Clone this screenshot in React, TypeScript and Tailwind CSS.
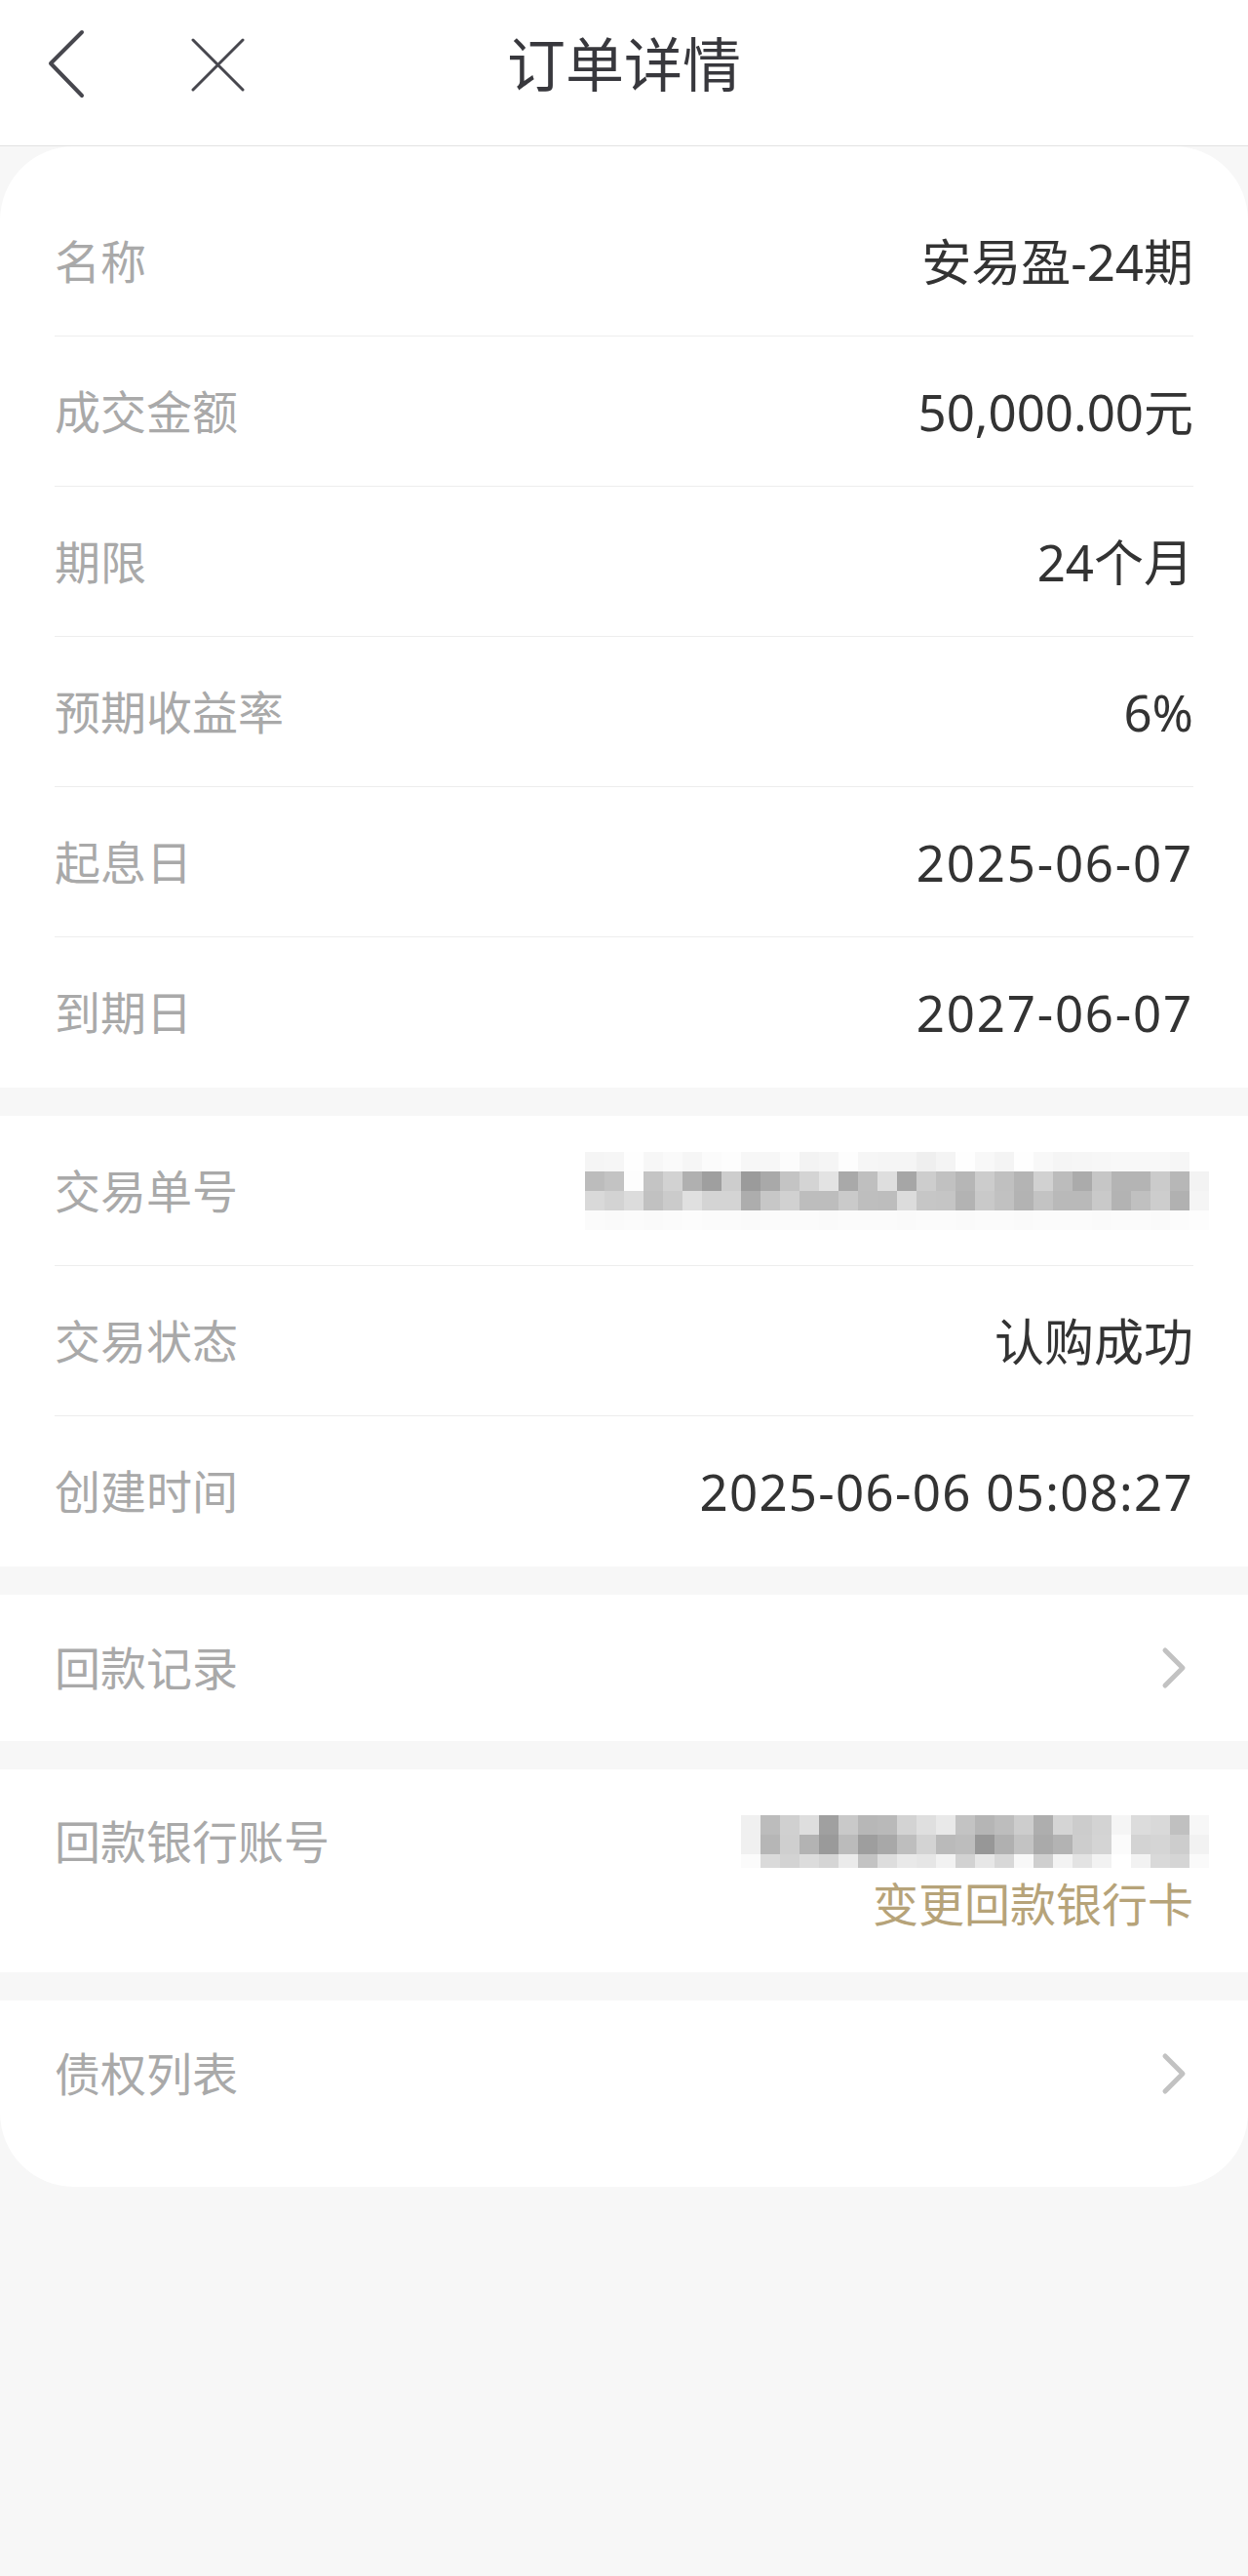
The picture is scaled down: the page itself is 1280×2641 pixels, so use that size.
import React from "react";

const font = "font-['Noto_Sans','Noto_Sans_CJK_SC',sans-serif]";

const basicRows = [
  { label: "名称", value: "安易盈-24期", wide: false },
  { label: "成交金额", value: "50,000.00元", wide: false },
  { label: "期限", value: "24个月", wide: false },
  { label: "预期收益率", value: "6%", wide: false },
  { label: "起息日", value: "2025-06-07", wide: true },
  { label: "到期日", value: "2027-06-07", wide: true },
];

// mosaic covering the order number
const orderMosaic = [
  ["f5", "f6", "fe", "f7", "fa", "f6", "fb", "fd", "f7", "f7", "fc", "f3", "f5", "fd", "f6", "f5", "f5", "ef", "f4", "fe", "f8", "f4", "fe", "f8", "f5", "f6", "f7", "f8", "f8", "f8", "f6", "ff"],
  ["bc", "c3", "fd", "c4", "d2", "b0", "9f", "cd", "9b", "a9", "c4", "d4", "e3", "a9", "bf", "de", "a6", "cd", "c1", "b6", "cc", "c0", "b4", "d1", "bc", "ab", "c6", "b4", "b4", "cb", "b7", "f3"],
  ["d9", "d3", "dc", "c1", "cb", "e0", "d4", "d4", "ad", "c7", "d1", "bd", "bd", "ca", "be", "bd", "dc", "c6", "c5", "b3", "c9", "c1", "b3", "c3", "b9", "b9", "c9", "b3", "c0", "cd", "b1", "f5"],
  ["fb", "fa", "fb", "fa", "fb", "fc", "fb", "fb", "fa", "fb", "fb", "fb", "fa", "fb", "fb", "fb", "fa", "fb", "fb", "fa", "fb", "fb", "fa", "fb", "fb", "fb", "fa", "fb", "fb", "fa", "fc", "fd"],
];

// mosaic covering the bank account
const bankMosaic = [
  ["f0", "bc", "d0", "de", "a0", "c9", "b7", "b9", "d3", "df", "e9", "c3", "b5", "bd", "cd", "ae", "d5", "cc", "d3", "f5", "dc", "d9", "c0", "f7"],
  ["f0", "b6", "cf", "b3", "9a", "bb", "9e", "a8", "be", "d3", "ba", "bd", "97", "b0", "c3", "aa", "b3", "cd", "d4", "fb", "d3", "d5", "cd", "f2"],
  ["fb", "da", "d3", "dc", "d5", "eb", "c3", "dd", "e9", "e6", "f2", "d2", "e7", "d8", "f8", "cf", "f3", "e3", "f2", "ff", "f2", "d9", "d5", "fa"],
];

function Mosaic({ rows, heights }: { rows: string[][]; heights: number[] }) {
  return (
    <div className="flex flex-col">
      {rows.map((row, i) => (
        <div key={i} className="flex">
          {row.map((c, j) => (
            <div
              key={j}
              className="w-[20px]"
              style={{ height: heights[i], background: `#${c}${c}${c}` }}
            />
          ))}
        </div>
      ))}
    </div>
  );
}

function Chevron() {
  return (
    <svg width="32" height="44" viewBox="0 0 32 44" fill="none" className="mr-[4px]">
      <path d="M7 4 L25 22 L7 40" stroke="#c2c2c2" strokeWidth="5" strokeLinecap="round" strokeLinejoin="round" />
    </svg>
  );
}

function Row({ label, children, last }: { label: string; children: React.ReactNode; last?: boolean }) {
  return (
    <div className={`flex h-[154px] items-center justify-between ${last ? "" : "border-b border-[#ededed]"}`}>
      <span className="text-[47px] leading-[64px] text-[#a9a9a9]">{label}</span>
      {children}
    </div>
  );
}

export default function App() {
  return (
    <div className={`min-h-[2641px] w-[1280px] bg-[#f7f7f7] ${font}`}>
      <header className="grid h-[150px] grid-cols-[1fr_auto_1fr] border-b border-[#e2e2e2] bg-white pt-[30px]">
        <div className="flex items-start pl-[48px]">
          <svg width="40" height="72" viewBox="0 0 40 72" fill="none">
            <path d="M36 3 L4 35 L36 68" stroke="#47474e" strokeWidth="4" strokeLinecap="round" strokeLinejoin="round" />
          </svg>
          <svg width="56" height="56" viewBox="0 0 56 56" fill="none" className="ml-[108px] mt-[8px]">
            <path d="M2 3 L53 54 M53 3 L2 54" stroke="#47474e" strokeWidth="3" strokeLinecap="round" />
          </svg>
        </div>
        <h1 className="text-[60px] font-normal leading-[72px] text-[#38383d]">订单详情</h1>
        <div />
      </header>

      <main className="flex flex-col gap-[29px]">
        <section className="rounded-t-[76px] bg-white px-[56px] pt-[41px]">
          {basicRows.map((r, i) => (
            <Row key={r.label} label={r.label} last={i === basicRows.length - 1}>
              <span
                className={`text-[51px] leading-[64px] text-[#333333] ${r.wide ? "tracking-[1.8px]" : "tracking-[0px]"}`}
              >
                {r.value}
              </span>
            </Row>
          ))}
        </section>

        <section className="bg-white px-[56px]">
          <Row label="交易单号">
            <div className="mr-[-16px]">
              <Mosaic rows={orderMosaic} heights={[20, 20, 20, 20]} />
            </div>
          </Row>
          <Row label="交易状态">
            <span className="text-[51px] leading-[64px] text-[#333333]">认购成功</span>
          </Row>
          <Row label="创建时间" last>
            <span className="text-[51px] leading-[64px] tracking-[1.3px] text-[#333333]">2025-06-06 05:08:27</span>
          </Row>
        </section>

        <section className="flex h-[150px] items-center justify-between bg-white px-[56px]">
          <span className="text-[47px] leading-[64px] text-[#a9a9a9]">回款记录</span>
          <Chevron />
        </section>

        <section className="flex h-[208px] items-start justify-between bg-white px-[56px] pt-[42px]">
          <span className="text-[47px] leading-[64px] text-[#a9a9a9]">回款银行账号</span>
          <div className="flex flex-col items-end">
            <div className="mr-[-16px] h-[64px] pt-[5px]">
              <Mosaic rows={bankMosaic} heights={[20, 20, 14]} />
            </div>
            <span className="text-[47px] leading-[64px] text-[#b6a379]">变更回款银行卡</span>
          </div>
        </section>

        <section className="flex h-[191px] items-start justify-between rounded-b-[76px] bg-white px-[56px] pt-[43px]">
          <span className="text-[47px] leading-[64px] text-[#a9a9a9]">债权列表</span>
          <div className="flex h-[64px] items-center">
            <Chevron />
          </div>
        </section>
      </main>
    </div>
  );
}
